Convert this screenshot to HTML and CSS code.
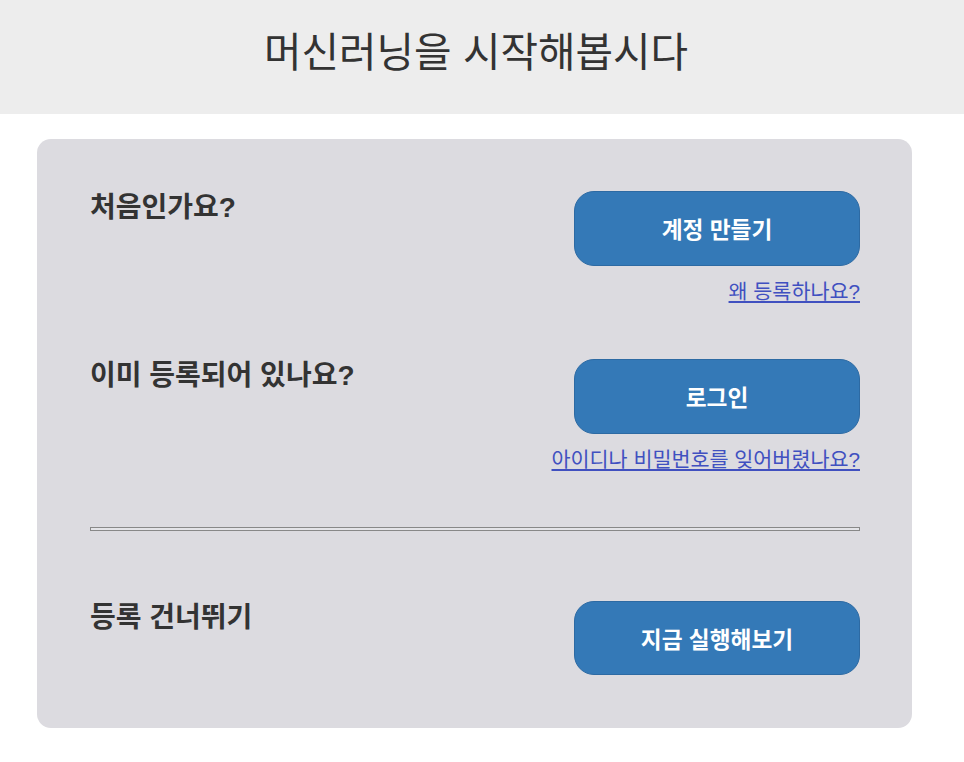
FILE: index.html
```html
<!DOCTYPE html>
<html lang="ko">
<head>
<meta charset="utf-8">
<title>머신러닝을 시작해봅시다</title>
<link rel="stylesheet" href="styles.css">
</head>
<body>
<header class="top">
  <h1 class="title">머신러닝을 시작해봅시다</h1>
</header>
<main class="card">
  <section class="row">
    <h2 class="label">처음인가요?</h2>
    <div class="actions">
      <a class="btn" href="#">계정 만들기</a>
      <a class="link" href="#">왜 등록하나요?</a>
    </div>
  </section>
  <section class="row row-second">
    <h2 class="label">이미 등록되어 있나요?</h2>
    <div class="actions">
      <a class="btn" href="#">로그인</a>
      <a class="link" href="#">아이디나 비밀번호를 잊어버렸나요?</a>
    </div>
  </section>
  <hr class="divider">
  <section class="row row-last">
    <h2 class="label">등록 건너뛰기</h2>
    <div class="actions">
      <a class="btn btn-last" href="#">지금 실행해보기</a>
    </div>
  </section>
</main>
</body>
</html>
```
FILE: styles.css
```css
html, body {
  margin: 0;
  padding: 0;
  background: #ffffff;
  font-family: "Liberation Sans", "Noto Sans CJK KR", sans-serif;
  color: #333333;
}
.top {
  background: #ededed;
  height: 114px;
  display: flex;
  align-items: center;
  justify-content: center;
  padding-right: 12px;
}
.title {
  margin: 0;
  font-size: 40.8px;
  font-weight: normal;
  color: #333333;
  line-height: 1;
  position: relative;
  top: -4px;
}
.card {
  margin: 25px 52px 0 37px;
  background: #dcdbe0;
  border-radius: 14px;
  padding: 52px 52px 53px 53px;
}
.row {
  display: flex;
  justify-content: space-between;
  align-items: flex-start;
}
.row-second {
  margin-top: 56px;
}
.row-last {
  margin-top: 70px;
}
.label {
  margin: 0;
  font-size: 28px;
  font-weight: bold;
  line-height: 34px;
  color: #333333;
}
.actions {
  display: flex;
  flex-direction: column;
  align-items: flex-end;
}
.btn {
  width: 286px;
  height: 75px;
  box-sizing: border-box;
  background: #3479b7;
  border: 1px solid #2d6aa3;
  border-radius: 20px;
  color: #ffffff;
  font-size: 22.7px;
  font-weight: bold;
  text-decoration: none;
  display: flex;
  align-items: center;
  justify-content: center;
}
.btn-last {
  height: 74px;
}
.link {
  margin-top: 15px;
  font-size: 20.7px;
  line-height: 22px;
  color: #4050c0;
  text-decoration: underline;
}
.divider {
  margin: 56px 0 0 0;
  box-sizing: border-box;
  height: 4px;
  border: 1px solid #888888;
  background: #e4e4e8;
}
```
